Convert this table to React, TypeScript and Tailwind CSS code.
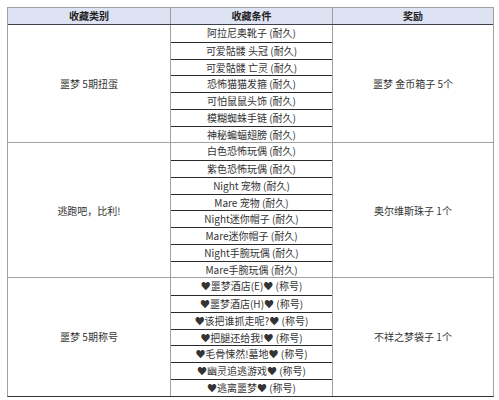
const groups = [
  {
    category: "噩梦 5期扭蛋",
    reward: "噩梦 金币箱子 5个",
    items: [
      "阿拉尼奥靴子 (耐久)",
      "可爱骷髅 头冠 (耐久)",
      "可爱骷髅 亡灵 (耐久)",
      "恐怖猫猫发箍 (耐久)",
      "可怕鼠鼠头饰 (耐久)",
      "模糊蜘蛛手链 (耐久)",
      "神秘蝙蝠翅膀 (耐久)",
    ],
  },
  {
    category: "逃跑吧，比利!",
    reward: "奥尔维斯珠子 1个",
    items: [
      "白色恐怖玩偶 (耐久)",
      "紫色恐怖玩偶 (耐久)",
      "Night 宠物 (耐久)",
      "Mare 宠物 (耐久)",
      "Night迷你帽子 (耐久)",
      "Mare迷你帽子 (耐久)",
      "Night手腕玩偶 (耐久)",
      "Mare手腕玩偶 (耐久)",
    ],
  },
  {
    category: "噩梦 5期称号",
    reward: "不祥之梦袋子 1个",
    items: [
      "♥噩梦酒店(E)♥ (称号)",
      "♥噩梦酒店(H)♥ (称号)",
      "♥该把谁抓走呢?♥ (称号)",
      "♥把腿还给我!♥ (称号)",
      "♥毛骨悚然!墓地♥ (称号)",
      "♥幽灵追逃游戏♥ (称号)",
      "♥逃离噩梦♥ (称号)",
    ],
  },
]

export default function App() {
  return (
    <div
      className="w-[499px] h-[400px] bg-white pt-[7px] pl-[7px] text-[10px] text-[#333]"
      style={{ fontFamily: '"Noto Sans CJK SC", "Noto Sans", sans-serif' }}
    >
      <div className="w-[487px] border border-[#a0a0a0] border-b-[#333]">
        {/* header */}
        <div className="flex h-[17px] bg-[#dde3f3] border-b border-[#3c414c] font-bold leading-[16px] text-[#222]">
          <div className="w-[163px] text-center border-r border-[#a0a0a0]">收藏类别</div>
          <div className="w-[162px] text-center border-r border-[#a0a0a0]">收藏条件</div>
          <div className="flex-1 text-center">奖励</div>
        </div>

        {groups.map((g, gi) => (
          <div
            key={gi}
            className={`flex ${gi > 0 ? "border-t border-[#a0a0a0]" : ""}`}
          >
            <div className="w-[163px] flex items-center justify-center border-r border-[#a0a0a0]">
              {g.category}
            </div>
            <div className="w-[162px] flex flex-col border-r border-[#a0a0a0]">
              {g.items.map((it, i) => (
                <div
                  key={i}
                  className={`h-[16.75px] leading-[15px] text-center whitespace-nowrap ${
                    i > 0 ? "border-t border-[#2a2a2a]" : ""
                  }`}
                >
                  {it}
                </div>
              ))}
            </div>
            <div className="flex-1 flex items-center justify-center">{g.reward}</div>
          </div>
        ))}
      </div>
    </div>
  )
}
